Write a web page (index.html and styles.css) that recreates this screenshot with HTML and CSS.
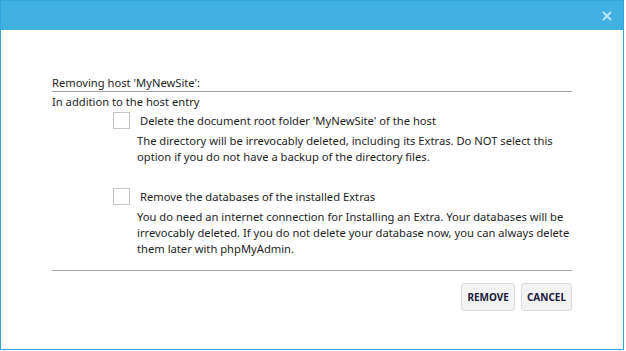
FILE: index.html
```html
<!DOCTYPE html>
<html>
<head>
<meta charset="utf-8">
<link rel="stylesheet" href="styles.css">
</head>
<body>
<div class="window">
  <div class="titlebar">
    <span class="close">
      <svg width="10" height="10" viewBox="0 0 10 10"><path d="M1 1L9 9M9 1L1 9" stroke="#bfe6f9" stroke-width="1.8"/></svg>
    </span>
  </div>
  <div class="content">
    <div class="heading">Removing host 'MyNewSite':</div>
    <div class="intro">In addition to the host entry</div>
    <div class="option first">
      <div class="row"><span class="box"></span><span class="label">Delete the document root folder 'MyNewSite' of the host</span></div>
      <div class="desc">The directory will be irrevocably deleted, including its Extras. Do NOT select this option if you do not have a backup of the directory files.</div>
    </div>
    <div class="option second">
      <div class="row"><span class="box"></span><span class="label">Remove the databases of the installed Extras</span></div>
      <div class="desc">You do need an internet connection for Installing an Extra. Your databases will be irrevocably deleted. If you do not delete your database now, you can always delete them later with phpMyAdmin.</div>
    </div>
    <div class="footer">
      <button class="btn remove">REMOVE</button>
      <button class="btn cancel">CANCEL</button>
    </div>
  </div>
</div>
</body>
</html>
```

FILE: styles.css
```css
html, body {
  margin: 0;
  padding: 0;
  background: #ffffff;
}
body {
  font-family: "Noto Sans", "Open Sans", sans-serif;
  font-size: 11.2px;
  color: #1e1e1e;
}
.window {
  width: 624px;
  height: 350px;
  box-sizing: border-box;
  border: 1px solid #2fa6dd;
  display: flex;
  flex-direction: column;
}
.titlebar {
  height: 29px;
  background: #41b1e1;
  display: flex;
  justify-content: flex-end;
  align-items: center;
  padding-right: 11px;
}
.close {
  display: flex;
  width: 10px;
  height: 10px;
}
.content {
  padding: 45px 0 0 51px;
  display: flex;
  flex-direction: column;
}
.heading {
  width: 520px;
  line-height: 16px;
  padding-bottom: 0;
  border-bottom: 1px solid #a0a0a0;
}
.intro {
  line-height: 16px;
  margin-top: 2px;
}
.option {
  display: flex;
  flex-direction: column;
}
.option.first { margin-top: 2px; }
.option.second { margin-top: 23px; }
.row {
  display: flex;
  align-items: center;
  padding-left: 61px;
}
.box {
  width: 15px;
  height: 15px;
  border: 1px solid #c4c4c4;
  background: #fff;
}
.label {
  margin-left: 10px;
  line-height: 16px;
}
.desc {
  margin-left: 85px;
  width: 440px;
  line-height: 16px;
  margin-top: 4px;
}
.footer {
  width: 520px;
  border-top: 1px solid #a0a0a0;
  margin-top: 13px;
  padding-top: 12px;
  display: flex;
  justify-content: flex-end;
  gap: 6px;
}
.btn {
  font-family: "Noto Sans", "Open Sans", sans-serif;
  font-weight: bold;
  font-size: 10px;
  color: #1a1a3c;
  height: 28px;
  padding: 0 5px;
  background: #f3f3f3;
  border: 1px solid #dcdcdc;
  border-radius: 3px;
}
```
